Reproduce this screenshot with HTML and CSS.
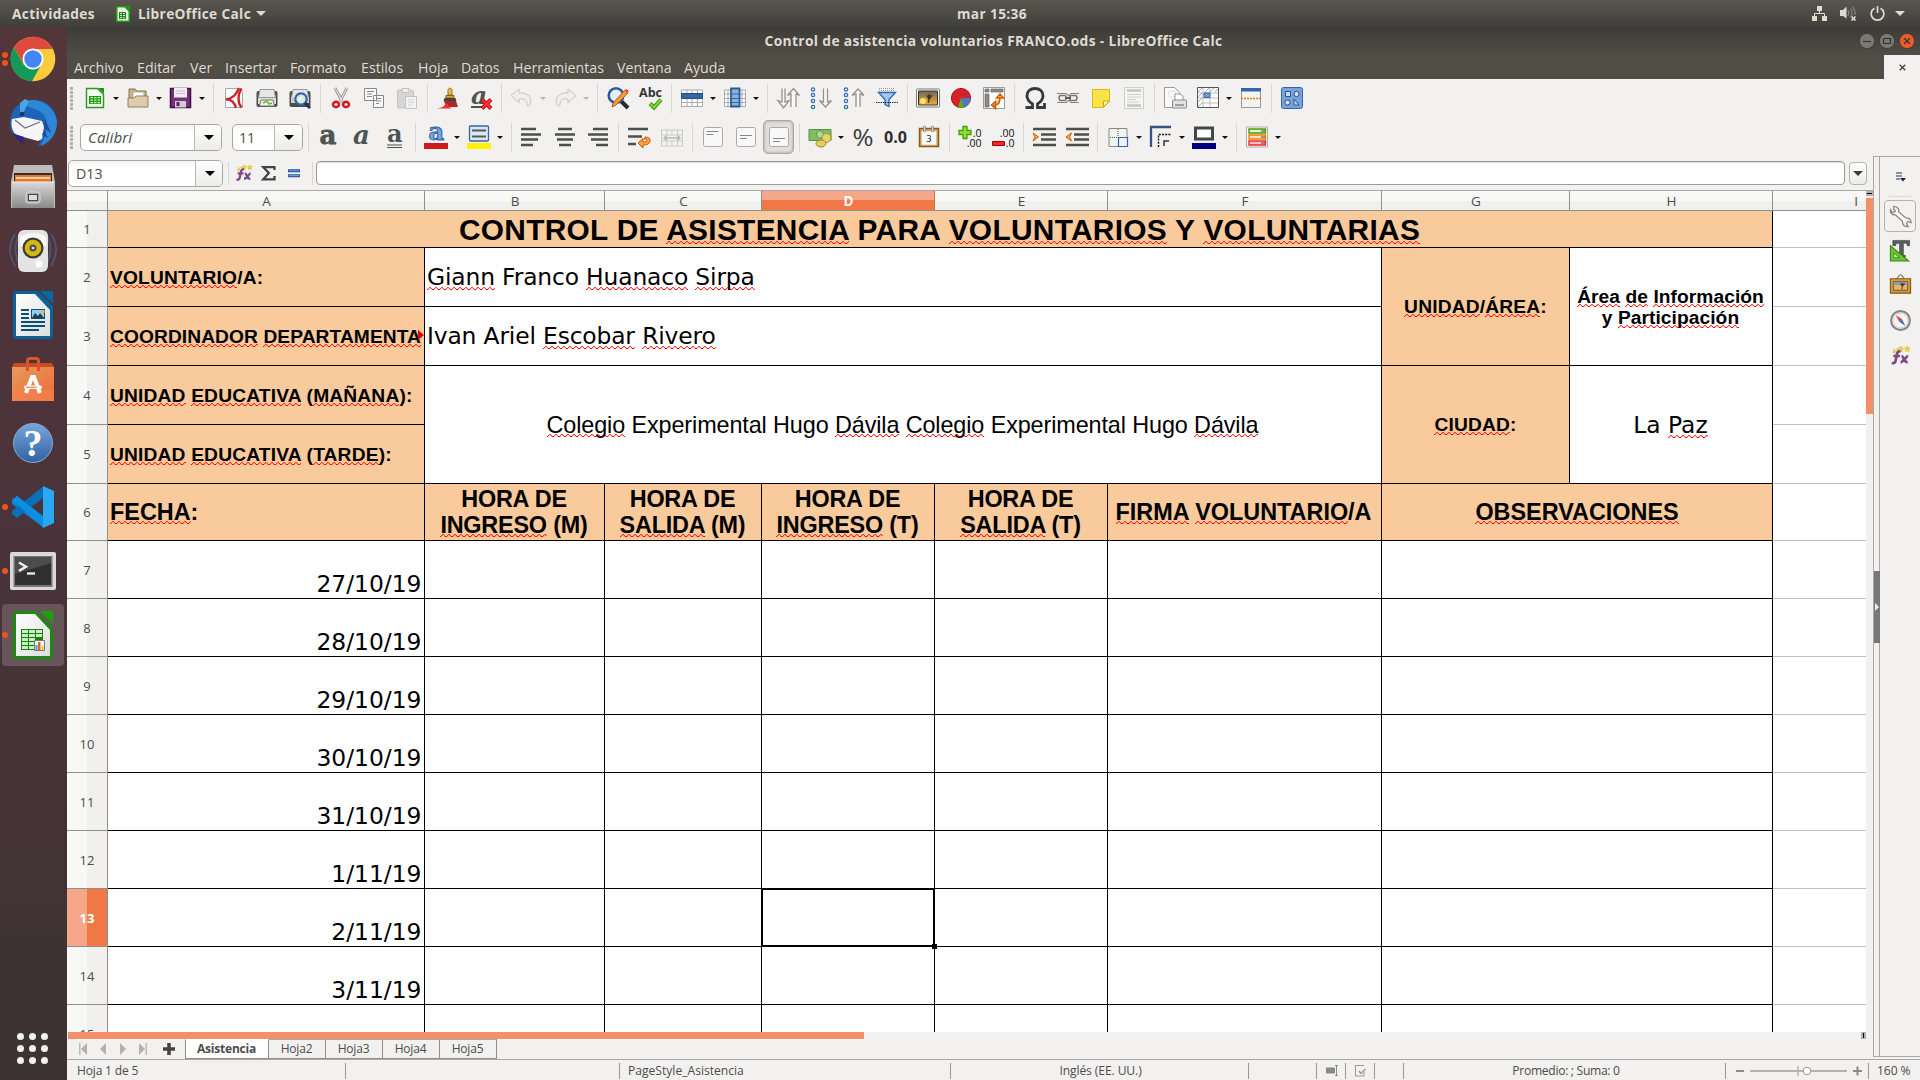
FILE: index.html
```html
<!DOCTYPE html>
<html lang="es">
<head>
<meta charset="utf-8">
<title>Control de asistencia voluntarios FRANCO.ods - LibreOffice Calc</title>
<link rel="stylesheet" href="styles.css">
</head>
<body>
<svg class="defs" width="0" height="0" aria-hidden="true">
  <defs>
    <linearGradient id="gBlue" x1="0" y1="0" x2="0" y2="1"><stop offset="0" stop-color="#7ba4dd"/><stop offset="1" stop-color="#2f639f"/></linearGradient>
    <linearGradient id="gGrey" x1="0" y1="0" x2="0" y2="1"><stop offset="0" stop-color="#d8d8d8"/><stop offset="1" stop-color="#8a8a8a"/></linearGradient>
    <linearGradient id="gPaper" x1="0" y1="0" x2="1" y2="1"><stop offset="0" stop-color="#fff"/><stop offset="1" stop-color="#dcdcdc"/></linearGradient>
    <linearGradient id="gBag" x1="0" y1="0" x2="1" y2="1"><stop offset="0" stop-color="#e69a5c"/><stop offset="1" stop-color="#ef6b35"/></linearGradient>
    <linearGradient id="gSky" x1="0" y1="0" x2="0" y2="1"><stop offset="0" stop-color="#6a6a60"/><stop offset="1" stop-color="#f7a831"/></linearGradient>
    <symbol id="fx" viewBox="0 0 24 24"><path d="M4 9l1-1M8 6l1-1" stroke="#f2cf27" stroke-width="2"/><path d="M12 2l1 2.200 2.200.3-1.700 1.500.4 2.200-1.900-1-2 1 .4-2.200-1.600-1.500 2.200-.3zM19 2l1 2 2.200.3-1.600 1.500.4 2.200-2-1-2 1 .4-2.200-1.600-1.500 2.200-.3zM5 5l.8 1.500 1.600.3-1.200 1.100.3 1.600L5 8.700z" fill="#f3d33a" stroke="#c9a51a" stroke-width=".4"/><g fill="none" stroke="#7b4a86" stroke-width="2.800"><path d="M12 8c-3-1-3.500 1-4 4l-1 5c-.5 3-2 3.500-4 2.500M4.500 12.500h7"/><path d="M13 12.500c2.500 0 2.500 7 6.500 6.500M20 12.500c-2 0-5 6.500-8 6.500"/></g></symbol>
    <symbol id="tree" viewBox="0 0 24 18"><path d="M12.500 16l1-5-2.500-4M13.500 11l3-4M13.500 9l-1-4" stroke="#33240f" stroke-width="1.600" fill="none"/><path d="M9 5l3 2 1-3 2 2 3-1-1 3-6 0z" fill="#4d3719"/></symbol>
  </defs>
</svg>

<header class="topbar">
  <div class="top-left"><span class="act">Actividades</span>
    <svg width="14" height="16" viewBox="0 0 14 16"><path d="M.8.8h8l4.400 4.400v10H.8z" fill="#f2f5ef" stroke="#1fa00e" stroke-width="1.500"/><path d="M9 0h5v5z" fill="#18a303"/><path d="M3 6h7v7H3z" fill="#15860a"/><path d="M4 7.500h2M7 7.500h2M4 9.500h2M7 9.500h2M4 11.700h2M7 11.700h2" stroke="#d8f5d3"/></svg>
    <span class="app">LibreOffice Calc</span><i class="tri light"></i></div>
  <div class="clock">mar 15:36</div>
  <div class="top-right">
    <svg width="15" height="15" viewBox="0 0 15 15"><path d="M5 0h5v5H5zM0 10h5v5H0zM10 10h5v5h-5z" fill="#dfdbd2"/><path d="M7.500 5v2.500M2.500 10V7.500h10V10" fill="none" stroke="#dfdbd2"/></svg>
    <svg width="17" height="15" viewBox="0 0 17 15"><path d="M0 4h3l3.500-3.500v12L3 10H0z" fill="#dfdbd2"/><path d="M8 4q1.500 3 0 6M10.500 2.500q3 4.500 0 9M12.500 1q3 3 2.500 8" fill="none" stroke="#85827b" stroke-width="1.300"/><path d="M11.500 10.500l4 4m0-4l-4 4" stroke="#dfdbd2" stroke-width="1.600"/></svg>
    <svg class="power" width="15" height="15" viewBox="0 0 15 15"><path d="M4.500 2.300a6.300 6.300 0 1 0 6 0M7.500 0v7" fill="none" stroke="#dfdbd2" stroke-width="1.700"/></svg>
    <i class="tri light"></i>
  </div>
</header>

<div class="desktop">
<nav class="dock">
  <div class="app-icon"><i class="run two"></i><svg width="46" height="46" viewBox="0 0 46 46"><circle cx="23" cy="23" r="22.300" fill="#fdcb3e"/><path d="M23 .7A22.300 22.300 0 0 0 4 11.500l9.500 16.500L23 13h20A22.300 22.300 0 0 0 23 .7z" fill="#dd4b3e"/><path d="M4 11.500A22.300 22.300 0 0 0 22 45.300L31 29l-9 4-8.500-4.500z" fill="#139a58"/><circle cx="23" cy="23" r="10.500" fill="#fff"/><circle cx="23" cy="23" r="8.700" fill="#4285f4"/></svg></div>
  <div class="app-icon"><svg width="48" height="48" viewBox="0 0 48 48"><path d="M20 2c14-4 26 6 28 20 0 12-7 22-19 25 3-4 3-7 2-9l-17-6L4 36C-2 24 2 8 12 5l2-3z" fill="#1b64b8"/><path d="M24 1c13 1 23 10 24 22 0 11-6 20-16 24 4-9 10-22 2-32C28 9 20 9 13 5c3-3 7-4 11-4z" fill="#2e86d6"/><path d="M11 4L16 0l4 2c-4 6-3 11-9 15z" fill="#4aa4e6"/><circle cx="13" cy="15" r="2.300" fill="#17355d"/><path d="M3 20l12-2 18 4 2 6-2 12-4 2-22-6C2 31 2 24 3 20z" fill="#f4f5f7"/><path d="M6 21l10 8 15-6" fill="none" stroke="#6f7478" stroke-width="1.200"/><path d="M3 34c4 6 8 9 13 11-2-3-2-4-1-7z" fill="#31257b"/><path d="M36 20l6 14-7-5zM35 31l4 8-6-3z" fill="#1b4d9c"/></svg></div>
  <div class="app-icon"><svg width="44" height="46" viewBox="0 0 44 46"><path d="M3 1h38l3 17v26H0V18z" fill="#bdbdbd"/><path d="M3 9h38v10H3z" fill="#3a2d24"/><path d="M4 11h36v7H4z" fill="#e8762c"/><path d="M5 14h34" stroke="#fff0c9" stroke-width="1.500"/><path d="M1 18h42v26H1z" fill="url(#gGrey)"/><path d="M1 18h42" stroke="#eee"/><rect x="15" y="28" width="14" height="11" rx="2.500" fill="#aaa" stroke="#ddd"/><rect x="17.500" y="30.500" width="9" height="6" fill="#ddd" stroke="#444"/></svg></div>
  <div class="app-icon"><svg width="50" height="46" viewBox="0 0 50 46"><path d="M7 6q-10 15 0 32M11 8q-7 12 0 28M43 6q10 15 0 32M39 8q7 12 0 28" fill="none" stroke="#4f5572" stroke-width="1.800"/><rect x="10" y="2" width="30" height="42" rx="6" fill="#e3e3e3"/><path d="M12 9q13-8 26 0v9H12z" fill="#f8f8f8"/><circle cx="25" cy="20" r="10.500" fill="#3b3b34"/><circle cx="25" cy="20" r="8.300" fill="#d6b814"/><circle cx="25" cy="20" r="3.600" fill="#555"/><circle cx="25" cy="20" r="1.300" fill="#ddd"/><circle cx="31" cy="36" r="3.500" fill="#fff"/></svg></div>
  <div class="app-icon"><svg width="40" height="48" viewBox="0 0 40 48"><path d="M3 0h22l15 15v30a3 3 0 0 1-3 3H3a3 3 0 0 1-3-3V3a3 3 0 0 1 3-3z" fill="#0b6198"/><path d="M27 0h13v13z" fill="#0369a3"/><path d="M3 3h19l15 16v26H3z" fill="url(#gPaper)"/><path d="M8 19h8M8 23h8M8 27h8M8 31h24M8 35h24M8 39h18" stroke="#0b5078" stroke-width="1.800"/><rect x="18.500" y="18.500" width="13" height="9" fill="#8fd0f4" stroke="#0b5078"/><path d="M19 27l3-5 3 3 2-3 4 5z" fill="#243b48"/><circle cx="30" cy="20.500" r="1.800" fill="#e8b64e"/></svg></div>
  <div class="app-icon"><svg width="42" height="44" viewBox="0 0 42 44"><path d="M2 6h38l2 4H0z" fill="#c94a20"/><path d="M0 10h42v34H0z" fill="url(#gBag)"/><path d="M0 33h42v11H0z" fill="#f4824d" opacity=".7"/><path d="M15.500 14V4q0-2.500 2.500-2.500h6q2.500 0 2.500 2.500v10" fill="none" stroke="#d9542a" stroke-width="3"/><path d="M14 36L20 20h2l6 16" fill="none" stroke="#fff" stroke-width="4"/><rect x="12" y="28.500" width="18" height="3.500" rx="1.700" fill="#fff"/><path d="M14 30.200h11" stroke="#ef6b35"/></svg></div>
  <div class="app-icon"><svg width="42" height="42" viewBox="0 0 42 42"><circle cx="21" cy="21" r="19.500" fill="url(#gBlue)" stroke="#84a9d8"/><text x="21" y="34" text-anchor="middle" font-family="Liberation Serif" font-size="38" font-weight="bold" fill="#fff">?</text></svg></div>
  <div class="app-icon"><i class="run"></i><svg width="42" height="42" viewBox="0 0 42 42"><path d="M0 14L5 10 32 31v11L0 18z" fill="#0a84d6"/><path d="M0 28L5 32 32 11V0L0 25z" fill="#0b70ba"/><path d="M0 14L5 10 32 31v11z" fill="#0d8ee0"/><path d="M31 0l11 5v32l-11 5z" fill="#2aa8f2"/></svg></div>
  <div class="app-icon"><i class="run"></i><svg width="46" height="38" viewBox="0 0 46 38"><rect width="46" height="38" rx="2" fill="#d9d9d9"/><rect x="3.500" y="4" width="39" height="31" fill="#777"/><rect x="5" y="5" width="36" height="28" fill="#303030"/><path d="M5 5h36v6L5 22z" fill="#4c4c4c"/><path d="M9 10.500l7 4.200-7 4.200" fill="none" stroke="#eee" stroke-width="2.400"/><path d="M17 21.500h8" stroke="#eee" stroke-width="2.300"/></svg></div>
  <div class="app-icon active"><i class="run"></i><svg width="40" height="48" viewBox="0 0 40 48"><path d="M3 0h20l17 17v28a3 3 0 0 1-3 3H3a3 3 0 0 1-3-3V3a3 3 0 0 1 3-3z" fill="#1a8a10"/><path d="M27 0h13v13z" fill="#18a303"/><path d="M3 3h19l15 16v26H3z" fill="url(#gPaper)"/><path d="M8 18h22v21H8z" fill="#1a7f10"/><path d="M9 20.500h6M16 20.500h6M23 20.500h6M9 24.500h6M16 24.500h6M23 24.500h6M9 28.500h6M16 28.500h6M9 32.500h6M16 32.500h6M9 36.500h6M16 36.500h6" stroke="#c9f0c2" stroke-width="3"/><path d="M21.500 29.500h10v10h-10z" fill="#fff" stroke="#777"/><path d="M22.500 34h2v5h-2z" fill="#29a3df"/><path d="M25 31h2.500v8H25z" fill="#e5641c"/><path d="M28.500 35h2v4h-2z" fill="#f1b51c"/></svg></div>
  <div class="launcher"><i></i><i></i><i></i><i></i><i></i><i></i><i></i><i></i><i></i></div>
</nav>

<main class="window">
  <div class="titlebar"><span class="title">Control de asistencia voluntarios FRANCO.ods - LibreOffice Calc</span>
    <div class="winbtns">
      <svg width="16" height="16" viewBox="0 0 16 16"><circle cx="8" cy="8" r="7.600" fill="#7b786f" stroke="#35342f" stroke-width=".7"/><path d="M4 8.500h8" stroke="#33322e" stroke-width="1.100"/></svg>
      <svg width="16" height="16" viewBox="0 0 16 16"><circle cx="8" cy="8" r="7.600" fill="#7b786f" stroke="#35342f" stroke-width=".7"/><path d="M4.500 5.500h7v5h-7z" fill="none" stroke="#33322e" stroke-width="1.200"/></svg>
      <svg width="16" height="16" viewBox="0 0 16 16"><circle cx="8" cy="8" r="7.600" fill="#ea5b2e" stroke="#35342f" stroke-width=".7"/><path d="M5.200 5.200l5.600 5.600m0-5.600l-5.600 5.600" stroke="#33322e" stroke-width="1.300"/></svg>
    </div>
  </div>
  <div class="menubar"><div class="menus"><span>Archivo</span><span>Editar</span><span>Ver</span><span>Insertar</span><span>Formato</span><span>Estilos</span><span>Hoja</span><span>Datos</span><span>Herramientas</span><span>Ventana</span><span>Ayuda</span></div>
    <div class="docclose"><svg width="7" height="7" viewBox="0 0 7 7"><path d="M.7.7l5.600 5.600m0-5.600L.7 6.300" stroke="#444" stroke-width="1.300"/></svg></div></div>

  <div class="toolbar std">
    <i class="handle"></i>
    <b class="tb"><svg viewBox="0 0 24 24"><path d="M3.500 2.500h11l6 6v13h-17z" fill="#f6faf5" stroke="#2a9a1c" stroke-width="1.400"/><path d="M15 2h6v6z" fill="#189b0d"/><path d="M6 10h12v8H6z" fill="#1c9a10"/><path d="M7.500 11.700h2.500M11 11.700h2.500M14.500 11.700H17M7.500 14.200h2.500M11 14.200h2.500M14.500 14.200H17M7.500 16.700h2.500M11 16.700h2.500M14.500 16.700H17" stroke="#c5f5bd" stroke-width="1.200"/></svg></b><i class="drop"></i>
    <b class="tb"><svg viewBox="0 0 24 24"><path d="M3 9V3h6l2 2h9v8H3z" fill="#c7b08c" stroke="#87714e"/><path d="M7 6h11v6H7z" fill="#fff" stroke="#b9a98c"/><path d="M2 21V12h6l2-2h12v11z" fill="#dfccae" stroke="#93805f"/></svg></b><i class="drop"></i>
    <b class="tb"><svg viewBox="0 0 24 24"><path d="M1.500 2.500h20v19h-20z" fill="#76307c" stroke="#3a1142" stroke-width="1.500"/><path d="M5 2h13v9.500H5z" fill="#f3eef5"/><path d="M7 5h9M7 7.500h9" stroke="#c9bed0"/><path d="M6 15h11v6.500H6z" fill="#cfcfcf"/><path d="M7.500 16h3v4h-3z" fill="#5a2261"/></svg></b><i class="drop"></i><i class="sep wide"></i>
    <b class="tb"><svg viewBox="0 0 24 24"><path d="M3.500 2.500h13l4 3v16h-17z" fill="#fafafa" stroke="#aaa"/><path d="M17 2c-3 7-5 9-13 12M4 13c5 0 9 4 10 9" fill="none" stroke="#cc2224" stroke-width="2.300"/><path d="M19.500 2.500c-4 6-4 14 0 19" fill="none" stroke="#cc2224" stroke-width="2.300"/></svg></b>
    <b class="tb"><svg viewBox="0 0 24 24"><rect x="1.500" y="5" width="21" height="16" rx="2" fill="#4a4d4a"/><path d="M5 3.500h14l1.500 8h-17z" fill="#e6e6e6" stroke="#999"/><path d="M3 12h18v6H3z" fill="#dcdcdc"/><path d="M6 14h12l1.500 6h-15z" fill="#eef8e6" stroke="#777"/><path d="M8 17l4-2 2 3 3-1" stroke="#63ba38" stroke-width="1.500" fill="none"/></svg></b>
    <b class="tb"><svg viewBox="0 0 24 24"><rect x="1.500" y="5" width="21" height="16" rx="2" fill="#4a4d4a"/><path d="M5 3.500h14l1.500 8h-17z" fill="#e6e6e6" stroke="#999"/><path d="M3 11h18v6H3z" fill="#ccc"/><circle cx="13" cy="13" r="5.700" fill="#d6ecd2" stroke="#3462af" stroke-width="2.200"/><path d="M11 14l3-3" stroke="#fff" stroke-width="2"/><path d="M17 17l5 5" stroke="#23334f" stroke-width="3"/></svg></b><i class="sep"></i>
    <b class="tb"><svg viewBox="0 0 24 24"><path d="M6 2l7.500 14M18 2l-7.500 14" stroke="#999" stroke-width="2.800"/><path d="M6 2l7.500 14M18 2l-7.500 14" stroke="#eee" stroke-width="1"/><ellipse cx="7" cy="18.500" rx="3" ry="2.600" fill="none" stroke="#cc1f26" stroke-width="2.600"/><ellipse cx="17" cy="18.500" rx="3" ry="2.600" fill="none" stroke="#cc1f26" stroke-width="2.600"/></svg></b>
    <b class="tb"><svg viewBox="0 0 24 24"><path d="M2.500 2.500h12v12h-12zM11.500 9.500h10v12h-10z" fill="#fafafa" stroke="#888"/><path d="M5 5.500h7M5 8h5M5 10.500h5M14 12.500h5M14 15h5M14 17.500h3" stroke="#888"/></svg></b>
    <b class="tb dim"><svg viewBox="0 0 24 24"><rect x="2.500" y="4" width="16" height="18" rx="1.500" fill="#d4d2cf" stroke="#bbb"/><path d="M7 2.500h7v4H7z" fill="#eee" stroke="#bbb"/><path d="M10.500 10.500h11v12h-11z" fill="#f4f4f4" stroke="#bbb"/><path d="M13 14h6M13 16.500h6M13 19h4" stroke="#ccc"/></svg></b><i class="sep"></i>
    <b class="tb"><svg viewBox="0 0 24 24"><path d="M12 9V4q2-4 4 0v5z" fill="#eeb95b" stroke="#a36b17"/><path d="M10 12V9.500h8V12z" fill="#e3a33e" stroke="#8f6020"/><path d="M8.500 12h11l1 3h-13z" fill="#444"/><path d="M8 15h12l2 6H10z" fill="#b1252b"/><path d="M1 22.500q8-1 9-6l5 6z" fill="#ef3333"/></svg></b>
    <b class="tb"><svg viewBox="0 0 24 24"><text x="2" y="18" font-family="DejaVu Serif" font-size="25" font-weight="bold" font-style="italic" fill="#4d5453">a</text><path d="M2 21h13" stroke="#4d5453" stroke-width="2"/><path d="M13 13.500l9 9m0-9l-9 9" stroke="#c01010" stroke-width="4"/><path d="M13.500 14l8 8m0-8l-8 8" stroke="#f34" stroke-width="1.800"/></svg></b><i class="sep"></i>
    <b class="tb dim"><svg viewBox="0 0 24 24"><path d="M1 9.500L9 3v4c9-1 14 5 11 12-1 1-3 1-3 0 0-5-3-7-8-6v4z" fill="#eee" stroke="#bfbfbd"/></svg></b><i class="drop off"></i>
    <b class="tb dim"><svg viewBox="0 0 24 24"><path d="M23 9.500L15 3v4C6 6 1 12 4 19c1 1 3 1 3 0 0-5 3-7 8-6v4z" fill="#eee" stroke="#bfbfbd"/></svg></b><i class="drop off"></i><i class="sep wide"></i>
    <b class="tb"><svg viewBox="0 0 24 24"><path d="M15 15l7 7" stroke="#232a36" stroke-width="4"/><circle cx="10" cy="9.500" r="7.300" fill="#e6edf7" stroke="#2f57a2" stroke-width="2.600"/><path d="M6 21l1-4L19 4l3 3L10 19z" fill="#f09b3b" stroke="#b35e13"/><path d="M18.500 4.500l2-1.500 2.500 2-2 2z" fill="#e34a4a"/></svg></b>
    <b class="tb"><svg viewBox="0 0 24 24"><text x="0" y="10.500" font-family="Open Sans" font-size="12.500" font-weight="700" fill="#333" textLength="23" lengthAdjust="spacingAndGlyphs">Abc</text><path d="M11 17.500l4 4 7-8" fill="none" stroke="#3a8f0c" stroke-width="4"/><path d="M11 17.500l4 4 7-8" fill="none" stroke="#7cdb35" stroke-width="2"/></svg></b><i class="sep"></i>
    <b class="tb"><svg viewBox="0 0 24 24"><path d="M1.500 4h21v16.500h-21z" fill="#fff" stroke="#aaa"/><path d="M2 7.500h20M2 12.500h20M2 16.500h20M7 4v17M12 4v17M17.500 4v17" stroke="#aaa"/><path d="M1.500 7.500h21v5h-21z" fill="#3465a4" stroke="#204a87"/></svg></b><i class="drop"></i>
    <b class="tb"><svg viewBox="0 0 24 24"><path d="M1.500 4h21v16.500h-21z" fill="#fff" stroke="#aaa"/><path d="M2 8h20M2 12.500h20M2 16.500h20M5 4v17M19 4v17" stroke="#aaa"/><path d="M8 2.500h8.500v18H8z" fill="#8eb2de" stroke="#2a5a99" stroke-width="1.800"/><path d="M8 8h8M8 12.500h8M8 16.500h8" stroke="#3465a4"/></svg></b><i class="drop"></i><i class="sep wide"></i>
    <b class="tb"><svg viewBox="0 0 24 24"><path d="M6 2.500V16l-4-1.500 5.500 7.500 5.500-7.500-4 1.500V2.500M15 21V8l-3.500 1.500L17.500 2.500 23.500 9.500 20 8v13" fill="#f8f8f8" stroke="#92928f" stroke-width="1.300"/></svg></b>
    <b class="tb"><svg viewBox="0 0 24 24"><g fill="#fff" stroke="#3a70b5" stroke-width="1.400"><circle cx="4" cy="3.500" r="1.600"/><circle cx="4" cy="9" r="1.600"/><circle cx="4" cy="15" r="1.600"/><circle cx="4" cy="21" r="1.600"/></g><path d="M14.500 2.500v13.500l-4-1.500 6 6.500 6-6.500-4 1.500V2.500" fill="#f8f8f8" stroke="#92928f" stroke-width="1.300"/></svg></b>
    <b class="tb"><svg viewBox="0 0 24 24"><g fill="#fff" stroke="#3a70b5" stroke-width="1.400"><circle cx="4" cy="3.500" r="1.600"/><circle cx="4" cy="9" r="1.600"/><circle cx="4" cy="15" r="1.600"/><circle cx="4" cy="21" r="1.600"/></g><path d="M14 21V8l-4 1.500L16 3l6 6.500L18 8v13" fill="#f8f8f8" stroke="#92928f" stroke-width="1.300"/></svg></b>
    <b class="tb"><svg viewBox="0 0 24 24"><path d="M4 2.500h16M4 4.500h16" stroke="#999" stroke-dasharray="1 1"/><path d="M3.500 6.500h17l-6.500 7v7l-4-2v-5z" fill="#a4c8f0" stroke="#2e66b0" stroke-width="1.300"/><path d="M1 16.500h22" stroke="#111" stroke-dasharray="1.300 1"/></svg></b><i class="sep"></i>
    <b class="tb"><svg viewBox="0 0 24 24"><rect x=".5" y="3" width="23" height="18" rx="1" fill="#fff" stroke="#777"/><path d="M2.500 5h19v14h-19z" fill="url(#gSky)" stroke="#333"/><circle cx="7" cy="15" r="3" fill="#ffe36b"/><use href="#tree" x="3" y="4" width="18" height="15"/></svg></b>
    <b class="tb"><svg viewBox="0 0 24 24"><circle cx="12" cy="12" r="9.600" fill="#d6202a" stroke="#a61118"/><path d="M12 12h9.600a9.600 9.600 0 0 1-7 9.200z" fill="#4a79bd"/><path d="M12 12l3 9.200q-3 1-6 0z" fill="#5cab27"/></svg></b>
    <b class="tb"><svg viewBox="0 0 24 24"><path d="M1.500 1.500h21v21h-21z" fill="#fff" stroke="#999"/><path d="M3 3h4v3H3zM9 3h12v3H9zM3 8h4v13H3z" fill="#8c8c8c" stroke="#555" stroke-width=".6"/><path d="M11 19.500c6 0 7-3 7-8M18 8l-3.500 4h7zM9.500 19l4-3.500v7z" fill="#f9b45a" stroke="#ce5c00" stroke-width="1.500"/></svg></b><i class="sep"></i>
    <b class="tb"><svg viewBox="0 0 24 24"><path d="M2.500 21.500h7v-3.500C5 15 4 12.500 4 10c0-5 3.500-7.500 8-7.500s8 2.500 8 7.500c0 2.500-1 5-5.500 8v3.500h7V17" fill="none" stroke="#34393c" stroke-width="2.800"/></svg></b>
    <b class="tb"><svg viewBox="0 0 24 24"><path d="M1 7.500h9l3 2.500 2-2.500h8M1 16.500h9l3-2.500 2 2.500h8" stroke="#888" fill="none" stroke-width="1.200"/><path d="M4 9.500q-2 2.500 0 5h5q3-2.500 0-5zM15 9.500q-3 2.500 0 5h5q2-2.500 0-5z" fill="none" stroke="#777" stroke-width="1.500"/><path d="M9 12h6" stroke="#555" stroke-width="1.800"/></svg></b>
    <b class="tb"><svg viewBox="0 0 24 24"><path d="M3.500 3.500h17v12l-6 6h-11z" fill="#f9e447" stroke="#dcb90d"/><path d="M14.500 21v-6h6z" fill="#fff9bd" stroke="#c8a50d"/></svg></b>
    <b class="tb dim"><svg viewBox="0 0 24 24"><path d="M2.500 1.500h19v21h-19z" fill="#f5f5f4" stroke="#c6c6c4"/><path d="M5 4.500h14M5 19.500h14" stroke="#bdbdbb" stroke-width="2.500"/><path d="M5 8.500h14M5 11h14M5 13.500h9M5 16h12" stroke="#ccc"/></svg></b><i class="sep"></i>
    <b class="tb"><svg viewBox="0 0 24 24"><path d="M1.500 1.500h10l5 5v15h-15z" fill="#fafafa" stroke="#999"/><path d="M6 5h6v6H6z" fill="none" stroke="#ddd"/><path d="M12 14V8h5l3 2v4" fill="#fff" stroke="#999"/><rect x="9.500" y="14" width="14" height="8" rx="1" fill="#e2e2e2" stroke="#888"/><path d="M12 19h9" stroke="#888" stroke-width="1.500"/></svg></b>
    <b class="tb"><svg viewBox="0 0 24 24"><path d="M1.500 1.500h21v20h-21z" fill="#fff"/><path d="M2 6l4-4M2 11l5-5M2 16l5-5M2 21l5-5M9 6l4-4M14 6l4-4M19 6l3-3" stroke="#8db3e2"/><path d="M7 1.500v20M14 2v20M1.500 7h21M1.500 12h21M7 17h15" stroke="#bbb"/><path d="M1.500 1.500h21v20h-21z" fill="none" stroke="#555"/><path d="M8 7h6v4.500H8z" fill="#729fcf" stroke="#3465a4"/></svg></b><i class="drop"></i>
    <b class="tb"><svg viewBox="0 0 24 24"><path d="M2.500 2.500h19v19h-19z" fill="#f3f3f2" stroke="#999"/><path d="M2 2h20v3.500H2z" fill="#3465a4"/><path d="M2 12.500h20" stroke="#f57900" stroke-width="1.300" stroke-dasharray="2 1"/></svg></b><i class="sep"></i>
    <b class="tb"><svg viewBox="0 0 24 24"><rect x="1.500" y="1.500" width="21" height="21" rx="2" fill="#78a3da" stroke="#3465a4"/><path d="M5.500 5.500h5v5h-5zM14 19h5l-5-6z" fill="#c9dcf3" stroke="#204a87" stroke-width=".9"/><circle cx="16.500" cy="8" r="2.600" fill="#d9e6f6" stroke="#204a87"/><circle cx="7.500" cy="16.500" r="2.600" fill="#d9e6f6" stroke="#204a87"/></svg></b>
  </div>

  <div class="toolbar fmt">
    <i class="handle"></i>
    <div class="combo font"><em>Calibri</em><span class="cbtn"><i></i></span></div>
    <div class="combo size"><span>11</span><span class="cbtn"><i></i></span></div>
    <i class="sep"></i>
    <b class="tb"><svg viewBox="0 0 24 24"><text x="2.500" y="18.500" font-family="DejaVu Serif" font-size="26" font-weight="bold" fill="#4d5453" stroke="#4d5453" stroke-width=".8">a</text></svg></b>
    <b class="tb"><svg viewBox="0 0 24 24"><text x="3" y="18.500" font-family="DejaVu Serif" font-size="26" font-weight="bold" font-style="italic" fill="#4d5453">a</text></svg></b>
    <b class="tb"><svg viewBox="0 0 24 24"><text x="4" y="17" font-family="DejaVu Serif" font-size="24" font-weight="bold" fill="#4d5453">a</text><path d="M4 20h15M4 22.500h15" stroke="#4d5453" stroke-width="1.200"/></svg></b><i class="sep"></i>
    <b class="tb"><svg viewBox="0 0 24 24"><text x="4.500" y="15" font-family="DejaVu Serif" font-size="24" font-weight="bold" fill="#7aa7e0" stroke="#2f62a8">a</text><path d="M0 18h24v6H0z" fill="#cc1c1c"/></svg></b><i class="drop"></i>
    <b class="tb"><svg viewBox="0 0 24 24"><rect x="2.500" y="1" width="19" height="15" rx="1" fill="#d9e7f7" stroke="#3465a4" stroke-width="1.300"/><path d="M5 5.500h14M5 11.500h14" stroke="#555b57" stroke-width="2.200"/><path d="M0 18h24v6H0z" fill="#fff200"/></svg></b><i class="drop"></i><i class="sep wide"></i>
    <b class="tb"><svg viewBox="0 0 24 24"><path d="M1 4h15M1 9.500h20M1 14.500h17M1 20h12" stroke="#4b504d" stroke-width="2.300"/></svg></b>
    <b class="tb"><svg viewBox="0 0 24 24"><path d="M5 4h14M2 9.500h20M4 14.500h16M6 20h12" stroke="#4b504d" stroke-width="2.300"/></svg></b>
    <b class="tb"><svg viewBox="0 0 24 24"><path d="M7 4h15M2 9.500h20M5 14.500h17M10 20h12" stroke="#4b504d" stroke-width="2.300"/></svg></b><i class="sep"></i>
    <b class="tb"><svg viewBox="0 0 24 24"><path d="M1 4h20M1 11.500h14M1 19h8" stroke="#4b504d" stroke-width="2.300"/><path d="M18 12q6 0 5 4.500Q22 20 16 20v3l-5-5 5-4.500V17q4 .500 4-1.500T17 14z" fill="#f8a24c" stroke="#ce5c00"/></svg></b>
    <b class="tb dim"><svg viewBox="0 0 24 24"><path d="M1.500 5h21v16h-21zM1.500 10h21M1.500 16h21M7 5v5M12 5v5M17.500 5v5M7 16v5M12 16v5M17.500 16v5" fill="#f3f3f2" stroke="#c3c3c1"/><path d="M4 13h16M7 10.500L4 13l3 2.500M17 10.500l3 2.500-3 2.500" stroke="#aaa" fill="none" stroke-width="1.500"/></svg></b><i class="sep"></i>
    <b class="tb"><svg viewBox="0 0 24 24"><rect x="2.500" y="2.500" width="19" height="19" rx="2" fill="#f8f8f8" stroke="#aaa"/><path d="M5.500 6.500h12M5.500 9.500h7" stroke="#888"/></svg></b>
    <b class="tb"><svg viewBox="0 0 24 24"><rect x="2.500" y="2.500" width="19" height="19" rx="2" fill="#f8f8f8" stroke="#aaa"/><path d="M6 10.500h12M6 13.500h7" stroke="#888"/></svg></b>
    <b class="tb on"><svg viewBox="0 0 24 24"><rect x="2.500" y="2.500" width="19" height="19" rx="2" fill="#f8f8f8" stroke="#aaa"/><path d="M6 13.500h12M6 16.500h7" stroke="#888"/></svg></b><i class="sep"></i>
    <b class="tb"><svg viewBox="0 0 24 24"><path d="M1 4.500h22v11H1z" fill="#80bd66" stroke="#54903f"/><ellipse cx="12" cy="9.500" rx="3.500" ry="3.800" fill="#a9d993" stroke="#5b9748"/><circle cx="18.500" cy="13" r="4.500" fill="#e7d46b" stroke="#ab9430"/><ellipse cx="13" cy="18.500" rx="5" ry="3.500" fill="#e2cd60" stroke="#a08a2b"/></svg></b><i class="drop"></i>
    <b class="tb"><svg viewBox="0 0 24 24"><text x="1.500" y="20.500" font-family="Open Sans" font-size="23" fill="#3c3c3c" textLength="21" lengthAdjust="spacingAndGlyphs">%</text></svg></b>
    <b class="tb"><svg viewBox="0 0 24 24"><text x="0" y="17.500" font-family="Open Sans" font-size="16" font-weight="700" fill="#2e2e2e" textLength="23" lengthAdjust="spacingAndGlyphs">0.0</text></svg></b>
    <b class="tb"><svg viewBox="0 0 24 24"><rect x="2.500" y="3.500" width="19" height="18" fill="#e0a84c" stroke="#8a5b13" stroke-width="1.500"/><path d="M4.500 6h15v14h-15z" fill="#fbfbfb" stroke="#bbb" stroke-width=".6"/><rect x="6.500" y="1" width="2" height="6" rx="1" fill="#ddd" stroke="#777" stroke-width=".7"/><rect x="14.500" y="1" width="2" height="6" rx="1" fill="#ddd" stroke="#777" stroke-width=".7"/><text x="12" y="16.500" text-anchor="middle" font-family="DejaVu Sans" font-size="8.500" fill="#222">3</text></svg></b><i class="sep"></i>
    <b class="tb"><svg viewBox="0 0 24 24"><path d="M5 1.500h4v4h4v4H9v4H5v-4H1v-4h4z" fill="#8ae234" stroke="#4e9a06" stroke-width="1.300"/><text x="23.500" y="12" text-anchor="end" font-family="Open Sans" font-size="10.500" fill="#111">.0</text><text x="23.500" y="22" text-anchor="end" font-family="Open Sans" font-size="10.500" fill="#111">.00</text></svg></b>
    <b class="tb"><svg viewBox="0 0 24 24"><path d="M1.500 16.500h12v4h-12z" fill="#ef2929" stroke="#a40000"/><text x="23.500" y="12" text-anchor="end" font-family="Open Sans" font-size="10.500" fill="#111">.00</text><text x="23.500" y="22" text-anchor="end" font-family="Open Sans" font-size="10.500" fill="#111">.0</text></svg></b><i class="sep"></i>
    <b class="tb"><svg viewBox="0 0 24 24"><path d="M1 4h23M9 9.500h15M9 14.500h15M1 20h23" stroke="#4b504d" stroke-width="2.300"/><path d="M1 8l5.500 4L1 16l2-4z" fill="#fcaf3e" stroke="#ce5c00"/></svg></b>
    <b class="tb"><svg viewBox="0 0 24 24"><path d="M1 4h23M9 9.500h15M9 14.500h15M1 20h23" stroke="#4b504d" stroke-width="2.300"/><path d="M6.500 8L1 12l5.500 4-2-4z" fill="#fcaf3e" stroke="#ce5c00"/></svg></b><i class="sep"></i>
    <b class="tb"><svg viewBox="0 0 24 24"><path d="M3 3.500h18v18H3z" fill="#f0f3ee" stroke="#888a85"/><path d="M12 4v8M4 12.500h8" stroke="#555" stroke-dasharray="1 1"/><path d="M12.500 12.500h9v9h-9z" fill="#eef3f9" stroke="#3465a4" stroke-width="1.200"/></svg></b><i class="drop"></i>
    <b class="tb"><svg viewBox="0 0 24 24"><path d="M2 22V2h20" fill="none" stroke="#36557e" stroke-width="2.300"/><path d="M9.500 22V9.500H22" fill="none" stroke="#111" stroke-width="1.400" stroke-dasharray="2 1.200"/><path d="M15 21v-5h5" fill="none" stroke="#333" stroke-width="1.500"/></svg></b><i class="drop"></i>
    <b class="tb"><svg viewBox="0 0 24 24"><path d="M3.500 3h17v11h-17z" fill="#fff" stroke="#444845" stroke-width="3"/><path d="M0 18h24v6H0z" fill="#000080"/></svg></b><i class="drop"></i><i class="sep wide"></i>
    <b class="tb"><svg viewBox="0 0 24 24"><path d="M1.500 2h21v20h-21z" fill="#fff" stroke="#aaa"/><path d="M4 4h16.500v4H4z" fill="#dff2cf" stroke="#4e9a06" stroke-width="1.400"/><path d="M4 10h16.500v4H4z" fill="#fde3c0" stroke="#f57900" stroke-width="1.400"/><path d="M4 16h16.500v4H4z" fill="#fac2c2" stroke="#ef2929" stroke-width="1.400"/><path d="M16 6h4M16 12h4M16 18h4" stroke="#444"/></svg></b><i class="drop"></i>
  </div>

  <div class="lower">
    <div class="work">
      <div class="formula">
        <div class="combo name"><span>D13</span><span class="cbtn"><i></i></span></div>
        <i class="sep"></i>
        <svg class="fi" viewBox="0 0 24 24"><use href="#fx"/></svg>
        <svg class="fi sum" viewBox="0 0 24 24"><path d="M20 8V4H5l7.500 8L5 20.500h15V16" fill="none" stroke="#3e4344" stroke-width="3"/></svg>
        <svg class="fi eq" viewBox="0 0 24 24"><path d="M4 9h16M4 15.500h16" stroke="#1f4f90" stroke-width="4"/><path d="M5 9h14M5 15.500h14" stroke="#6ba0dc" stroke-width="1.500"/></svg>
        <i class="sep"></i>
        <div class="input"></div>
        <div class="expand"><i></i></div>
      </div>

      <div class="gridwrap">
      <div class="sheet">
        <div class="ch corner"></div><div class="ch">A</div><div class="ch">B</div><div class="ch">C</div><div class="ch sel">D</div><div class="ch">E</div><div class="ch">F</div><div class="ch">G</div><div class="ch">H</div><div class="ch last">I</div>

        <div class="rh">1</div><div class="c o mid title1 s8"><p>CONTROL DE <u>ASISTENCIA</u> PARA <u>VOLUNTARIOS</u> Y <u>VOLUNTARIAS</u></p></div><div class="g"></div>

        <div class="rh">2</div><div class="c o b9"><p><u>VOLUNTARIO</u>/A:</p></div><div class="c dv name-cell s5"><p><u>Giann</u> Franco <u>Huanaco</u> <u>Sirpa</u></p></div><div class="c o mid b9 r2"><p><u>UNIDAD</u>/<u>ÁREA</u>:</p></div><div class="c mid b9 area r2"><p><u>Área</u> <u>de</u> <u>Información</u><br>y <u>Participación</u></p></div><div class="g"></div>
        <div class="rh">3</div><div class="c o b9 more"><p><u>COORDINADOR</u> <u>DEPARTAMENTA</u></p></div><div class="c dv name-cell s5"><p>Ivan Ariel <u>Escobar</u> <u>Rivero</u></p></div><div class="g"></div>
        <div class="rh">4</div><div class="c o b9"><p><u>UNIDAD</u> <u>EDUCATIVA</u> (<u>MAÑANA</u>):</p></div><div class="c mid n11 s5 r2"><p><u>Colegio</u> Experimental Hugo <u>Dávila</u> <u>Colegio</u> Experimental Hugo <u>Dávila</u></p></div><div class="c o mid b9 r2"><p><u>CIUDAD</u>:</p></div><div class="c mid dv city r2"><p>La <u>Paz</u></p></div><div class="g"></div>
        <div class="rh">5</div><div class="c o b9"><p><u>UNIDAD</u> <u>EDUCATIVA</u> (<u>TARDE</u>):</p></div><div class="g"></div>

        <div class="rh">6</div><div class="c o b11"><p><u>FECHA</u>:</p></div><div class="c o mid b11 hr"><p>HORA DE<br><u>INGRESO</u> (M)</p></div><div class="c o mid b11 hr"><p>HORA DE<br><u>SALIDA</u> (M)</p></div><div class="c o mid b11 hr"><p>HORA DE<br><u>INGRESO</u> (T)</p></div><div class="c o mid b11 hr"><p>HORA DE<br><u>SALIDA</u> (T)</p></div><div class="c o mid b11 sign"><p><u>FIRMA</u> <u>VOLUNTARIO</u>/A</p></div><div class="c o mid b11 s2"><p><u>OBSERVACIONES</u></p></div><div class="g"></div>

        <div class="rh">7</div><div class="c date">27/10/19</div><div class="c"></div><div class="c"></div><div class="c"></div><div class="c"></div><div class="c"></div><div class="c s2"></div><div class="g"></div>
        <div class="rh">8</div><div class="c date">28/10/19</div><div class="c"></div><div class="c"></div><div class="c"></div><div class="c"></div><div class="c"></div><div class="c s2"></div><div class="g"></div>
        <div class="rh">9</div><div class="c date">29/10/19</div><div class="c"></div><div class="c"></div><div class="c"></div><div class="c"></div><div class="c"></div><div class="c s2"></div><div class="g"></div>
        <div class="rh">10</div><div class="c date">30/10/19</div><div class="c"></div><div class="c"></div><div class="c"></div><div class="c"></div><div class="c"></div><div class="c s2"></div><div class="g"></div>
        <div class="rh">11</div><div class="c date">31/10/19</div><div class="c"></div><div class="c"></div><div class="c"></div><div class="c"></div><div class="c"></div><div class="c s2"></div><div class="g"></div>
        <div class="rh">12</div><div class="c date">1/11/19</div><div class="c"></div><div class="c"></div><div class="c"></div><div class="c"></div><div class="c"></div><div class="c s2"></div><div class="g"></div>
        <div class="rh sel">13</div><div class="c date">2/11/19</div><div class="c"></div><div class="c"></div><div class="c cursor"></div><div class="c"></div><div class="c"></div><div class="c s2"></div><div class="g"></div>
        <div class="rh">14</div><div class="c date">3/11/19</div><div class="c"></div><div class="c"></div><div class="c"></div><div class="c"></div><div class="c"></div><div class="c s2"></div><div class="g"></div>
        <div class="rh">15</div><div class="c"></div><div class="c"></div><div class="c"></div><div class="c"></div><div class="c"></div><div class="c"></div><div class="c s2"></div><div class="g"></div>
      </div>
      <div class="vscroll"><i class="split"></i><i class="thumb"></i></div>
      </div>
      <div class="hscroll"><i class="thumb"></i><i class="split"></i></div>
      <div class="tabs">
        <div class="nav">
          <svg width="8" height="12" viewBox="0 0 8 12"><path d="M8 0v12L2 6z" fill="#b4b2ae"/><path d="M.8 0v12" stroke="#b4b2ae" stroke-width="1.300"/></svg>
          <svg width="8" height="12" viewBox="0 0 8 12"><path d="M7 0v12L1 6z" fill="#b4b2ae"/></svg>
          <svg width="8" height="12" viewBox="0 0 8 12"><path d="M1 0v12l6-6z" fill="#b4b2ae"/></svg>
          <svg width="8" height="12" viewBox="0 0 8 12"><path d="M0 0v12l6-6z" fill="#b4b2ae"/><path d="M7.200 0v12" stroke="#b4b2ae" stroke-width="1.300"/></svg>
        </div>
        <svg class="add" width="12" height="12" viewBox="0 0 12 12"><path d="M6 0v12M0 6h12" stroke="#444" stroke-width="3.600"/></svg>
        <div class="tab cur">Asistencia</div><div class="tab">Hoja2</div><div class="tab">Hoja3</div><div class="tab">Hoja4</div><div class="tab">Hoja5</div>
      </div>
    </div>
    <aside class="side">
      <svg class="menuicon" width="10" height="10" viewBox="0 0 10 10"><path d="M0 1h6M0 4h6M0 7h4" stroke="#2b3350" stroke-width="1.200"/><path d="M4 6h6L7 9.500z" fill="#1b2440"/></svg>
      <hr>
      <div class="sb box"><svg viewBox="0 0 24 24"><path d="M5 1.500q-1 2 1 4t-3 2Q1.500 6 1.500 4q-1 6 5.500 6.500L14 17q0 6 6 5.500l-2-3 2-2.500 3 1.500q0-5-5.500-5L10 7q1-4.500-5-5.500z" fill="#f7f7f6" stroke="#868683" stroke-width="1.300"/></svg></div>
      <div class="sb"><svg viewBox="0 0 24 24"><path d="M4 1.500h17.500V7H19l-.5-2.500H15V17h2v2H9v-2h2V4.500H7.500L7 7H4z" fill="#56605f" stroke="#353b3a" stroke-width=".6"/><path d="M1.500 7v16h19z" fill="#6cc235" stroke="#3f8a12" stroke-width="1.200"/><path d="M5 14.500v5h6z" fill="#d5f2c0" stroke="#3f8a12"/></svg></div>
      <div class="sb gal"><svg viewBox="0 0 24 24"><path d="M8 5l3-4h2l3 4" fill="none" stroke="#777" stroke-width="1.200"/><path d="M1.500 5h21v15h-21z" fill="#d99b3a" stroke="#8a570c" stroke-width="1.200"/><path d="M4.500 8h15v9h-15z" fill="#e9b362" stroke="#5d574c"/><path d="M5 8.500h14v3H5z" fill="#7c9cc0"/><use href="#tree" x="6" y="6" width="14" height="12"/></svg></div>
      <div class="sb comp"><svg viewBox="0 0 24 24"><circle cx="12" cy="12" r="9.800" fill="#f5f5f5" stroke="#858585" stroke-width="2.200"/><circle cx="12" cy="12" r="7.800" fill="none" stroke="#ccc"/><path d="M7 6.500l6.500 4-2.500 3z" fill="#e3383c"/><path d="M17 17.500l-6-4 2.500-3z" fill="#3f6fb0"/></svg></div>
      <div class="sb fxs"><svg viewBox="0 0 24 24"><use href="#fx"/></svg></div>
      <div class="grip"></div>
    </aside>
  </div>

  <footer class="status">
    <div class="st a">Hoja 1 de 5</div><div class="st b"></div><div class="st c1">PageStyle_Asistencia</div><div class="st d">Inglés (EE. UU.)</div><div class="st e"></div>
    <div class="st f"><svg width="12" height="11" viewBox="0 0 12 11"><path d="M0 2.500h9v6H0z" fill="#888a85"/><path d="M9 .5h3M9 10.500h3M10.500.5v10" stroke="#888a85"/></svg></div>
    <div class="st f"><svg width="12" height="12" viewBox="0 0 12 12"><path d="M9 7v4H.5V.5H9" fill="none" stroke="#999"/><path d="M4 6l2 2.500L10.500 4" fill="none" stroke="#999" stroke-width="1.500"/></svg></div>
    <div class="st f"></div>
    <div class="st h">Promedio: ; Suma: 0</div>
    <div class="st z"><svg width="128" height="12" viewBox="0 0 128 12"><path d="M0 6h8M117 6h9M121.500 1.500v9" stroke="#8b8b87" stroke-width="2"/><path d="M14 6h97" stroke="#b5b3af" stroke-width="2"/><path d="M62 1v10" stroke="#b5b3af" stroke-width="1.500"/><circle cx="71" cy="6" r="3.800" fill="#fff" stroke="#999"/></svg></div>
    <div class="st p">160 %</div>
  </footer>
</main>
</div>
</body>
</html>
```
FILE: styles.css
```css
* { box-sizing: border-box; }
body { margin: 0; width: 1920px; height: 1080px; overflow: hidden; font-family: "Open Sans", "Noto Sans", sans-serif; font-size: 14.2px; color: #4c4c4c; background: #f2f1ef; }
.defs { position: absolute; }
svg { display: block; flex: none; }
p { margin: 0; }

.topbar { height: 27px; display: grid; grid-template-columns: 1fr auto 1fr; align-items: center; background: linear-gradient(#59564e, #403f3a); color: #dfdbd2; font-weight: 700; font-size: 13.7px; line-height: 20px; letter-spacing: .35px; padding: 0 15px 0 12px; }
.top-left { display: flex; align-items: center; }
.act { width: 104px; }
.app { margin: 0 5px 0 8px; white-space: nowrap; }
.clock { white-space: nowrap; padding-left: 67px; }
.top-right { display: flex; justify-content: flex-end; align-items: center; gap: 13px; }
.power { margin-right: -3px; }
.tri { border: 5px solid transparent; border-top-color: #dfdbd2; border-bottom: 0; }

.desktop { display: flex; height: 1053px; }
.dock { width: 67px; background: linear-gradient(#533639, #4a333a 45%, #3c3234); display: flex; flex-direction: column; }
.app-icon { height: 64px; display: flex; align-items: center; justify-content: center; position: relative; flex: none; padding-right: 1px; }
.app-icon.active::before { content: ""; position: absolute; inset: 1px 3px 1px 2px; background: #68555b; border-radius: 4px; }
.app-icon svg { position: relative; }
.run { position: absolute; left: 2px; top: 29px; width: 6px; height: 6px; border-radius: 50%; background: #e95420; z-index: 1; }
.run.two { top: 25px; box-shadow: 0 8px #e95420; }
.launcher { margin: auto 0 16px 17px; display: grid; grid-template-columns: repeat(3, 7px); gap: 5px; }
.launcher i { width: 7px; height: 7px; border-radius: 50%; background: #f3f1f1; }

.window { width: 1853px; display: flex; flex-direction: column; }
.titlebar { height: 28px; background: linear-gradient(#3c3b37, #504d45); color: #dfdbd2; font-weight: 700; font-size: 13.8px; letter-spacing: .35px; display: flex; align-items: center; justify-content: center; position: relative; padding-bottom: 1px; }
.winbtns { position: absolute; right: 5px; top: 6px; display: flex; gap: 4px; }
.menubar { height: 24px; background: #504d45; color: #dfdbd2; display: flex; justify-content: space-between; }
.menus { display: grid; grid-template-columns: 63px 53px 35px 65px 71px 57px 43px 52px 104px 67px 50px; padding-left: 7px; line-height: 25px; }
.docclose { width: 36px; background: #f2f1f0; display: grid; place-items: center; }

.toolbar { display: flex; align-items: center; height: 39px; }
.toolbar.std { padding-bottom: 1px; }
.toolbar.fmt { height: 38px; }
.handle { width: 3px; height: 23px; margin: 0 5px 0 3px; background: repeating-linear-gradient(#b3b1ad 0 3px, transparent 3px 4px); }
.fmt .handle { margin-right: 7px; }
.tb { width: 33px; height: 34px; display: grid; place-items: center; flex: none; font-weight: 400; }
.tb svg { width: 24px; height: 24px; overflow: visible; }
.tb.dim { opacity: .85; }
.tb.on { position: relative; }
.tb.on::before { content: ""; position: absolute; inset: 0 1px; border: 1px solid #aaa8a4; border-radius: 5px; background: #e0dfdd; box-shadow: inset 0 0 3px #999; }
.tb.on svg { position: relative; }
.drop { width: 10px; flex: none; display: grid; place-items: center; }
.drop::before { content: ""; border: 3px solid transparent; border-top-color: #111; border-bottom: 0; }
.drop.off::before { border-top-color: #b5b3b0; }
.sep { width: 8px; height: 29px; flex: none; background: linear-gradient(#d9d7d4, #d9d7d4) 4px 0 / 1px 100% no-repeat; }
.sep.wide { width: 10px; background-position-x: 6px; }
.combo { height: 27px; border: 1px solid #a9a6a1; border-radius: 5px; background: linear-gradient(#f4f4f3, #fff 30%); display: flex; align-items: stretch; overflow: hidden; line-height: 25px; flex: none; }
.combo > :first-child { flex: 1; padding-left: 7px; }
.cbtn { width: 28px; border-left: 1px solid #bbb8b3; background: linear-gradient(#fdfdfd, #ececea); display: grid; place-items: center; }
.cbtn i, .expand i { border: 5px solid transparent; border-top-color: #000; border-bottom: 0; }
.combo.font { width: 142px; margin-right: 10px; font-size: 15px; letter-spacing: .15px; }
.font .cbtn { width: 27px; padding-left: 1px; }
.combo.size { width: 71px; margin-right: 1px; }
.combo.size > :first-child { padding-left: 6px; }
.combo.name { width: 155px; margin: 0 1px 0 1px; }
.name .cbtn { width: 27px; padding-left: 1px; }

.lower { display: flex; height: 903px; }
.work { width: 1806px; display: flex; flex-direction: column; }
.formula { height: 34px; display: flex; align-items: center; }
.fi { width: 20px; height: 20px; margin: 0 3px 0 2px; }
.fi.sum { width: 19px; margin: 0 3px 0 2px; height: 18px; }
.fi.eq { width: 18px; height: 18px; margin: 0 5px 0 4px; }
.formula .sep { height: 23px; }
.input { flex: 1; height: 24px; border: 1px solid #9c9a96; border-radius: 4px; background: #fff; box-shadow: inset 0 1px 1px #ddd; }
.expand { width: 18px; height: 23px; margin: 0 6px 0 4px; border: 1px solid #b5b3af; border-radius: 4px; background: linear-gradient(#fff, #ececea); display: grid; place-items: center; }
.expand i { border-top-color: #3c3c3c; }

.gridwrap { display: flex; height: 842px; border-top: 1px solid #a9a8a4; flex: none; }
.sheet { width: 1799px; height: 841px; overflow: hidden; background: #fff; color: #000; display: grid;
  grid-template-columns: 41px 317px 180px 157px 173px 173px 274px 188px 203px 93px;
  grid-template-rows: 20px 37px repeat(4, 59px) 57px repeat(8, 58px) 58px; }
.ch { background: linear-gradient(#f8f8f7 10px, #f1f0ee 10px); border-right: 1px solid #8f8f8b; border-bottom: 1px solid #8f8f8b; color: #4c4c4c; text-align: center; line-height: 20px; height: 20px; font-size: 13.5px; padding-left: 1px; }
.ch.sel { background: linear-gradient(#f5a78a 9px, #f07746 9px); color: #fff; font-weight: 700; border-right-color: #d96e45; }
.ch.last { border-right: 0; text-align: right; padding-right: 8px; }
.rh { background: linear-gradient(90deg, #f8f8f7 20px, #f1f0ee 20px); border-right: 1px solid #8f8f8b; border-bottom: 1px solid #8f8f8b; color: #4c4c4c; font-size: 13px; display: grid; place-items: center; grid-column: 1; }
.rh.sel { background: linear-gradient(90deg, #f5a78a 20px, #f07746 20px); color: #fff; font-weight: 700; }
.c { border-right: 1px solid #000; border-bottom: 1px solid #000; display: flex; align-items: center; padding-left: 2px; white-space: nowrap; min-width: 0; position: relative; }
.g { border-bottom: 1px solid #c0c0c0; grid-column: 10; }
.o { background: #f8ca9c; }
.mid { justify-content: center; text-align: center; padding-left: 0; }
.s2 { grid-column: span 2; }
.s5 { grid-column: span 5; }
.s8 { grid-column: span 8; }
.r2 { grid-row: span 2; }
.b9 { font: bold 19.2px/21px "Liberation Sans", sans-serif; letter-spacing: .17px; }
.b11 { font: bold 23.4px/26px "Liberation Sans", sans-serif; }
.b11.hr { letter-spacing: -.2px; padding-right: 1px; }
.b11.sign { padding-right: 2px; }
.n11 { font: 23.4px/26px "Liberation Sans", sans-serif; letter-spacing: -.11px; padding-right: 1px; }
.title1 { font: bold 29.87px/34px "Liberation Sans", sans-serif; letter-spacing: .3px; padding: 1px 1px 0 0; }
.dv { font: 23.4px/27px "DejaVu Sans", sans-serif; }
.name-cell { letter-spacing: -.16px; }
.area { padding-right: 1px; letter-spacing: .06px; }
.city { padding: 2px 1px 0 0; }
.date { font: 23.4px/27px "DejaVu Sans", sans-serif; justify-content: flex-end; align-items: flex-end; padding-right: 2.5px; }
u { text-decoration: none; background: url("data:image/svg+xml,%3Csvg xmlns='http://www.w3.org/2000/svg' width='6' height='3'%3E%3Cpath d='M0 2.500L1 2.500 2.500.5 3.500.5 5 2.500 6 2.500' fill='none' stroke='red'/%3E%3C/svg%3E") 0 100% repeat-x; }
.b11 u, .n11 u, .dv u { background-position-y: calc(100% - 1px); }
.title1 u { background-position-y: calc(100% - 2px); }
.more { letter-spacing: .08px; }
.more p { width: 314px; overflow: hidden; }
.more::after { content: ""; position: absolute; right: 0; top: 23px; border: 5px solid transparent; border-left: 6px solid #e00000; border-right: 0; }
.cursor::before { content: ""; position: absolute; inset: -1px -1px -1px -1px; border: 2px solid #000; }
.cursor::after { content: ""; position: absolute; right: -3px; bottom: -3px; width: 5px; height: 5px; background: #000; }

.vscroll { width: 7px; display: flex; flex-direction: column; }
.vscroll .split { height: 5px; background: linear-gradient(#000, #000) 1px 2px / 5px 1px no-repeat #b3b1ad; margin-bottom: 2px; }
.vscroll .thumb { height: 216px; background: #f39069; }
.hscroll { height: 7px; display: flex; justify-content: space-between; padding: 0 7px 0 1px; flex: none; }
.hscroll .thumb { width: 796px; background: #f39069; }
.hscroll .split { width: 5px; background: linear-gradient(#000, #000) 2px 1px / 1px 5px no-repeat #b3b1ad; }
.tabs { height: 20px; display: flex; align-items: flex-start; font-size: 12px; line-height: 18px; }
.nav { display: flex; gap: 12px; padding: 4px 0 0 12px; width: 96px; }
.add { margin: 4px 10px 0 0; }
.tab { height: 20px; width: 57px; border: 1px solid #8f8f8b; border-top-color: #aaa; border-left: 0; text-align: center; letter-spacing: -.2px; padding-right: 1px; }
.tab.cur { width: 84px; background: #fff; font-weight: 700; border-left: 1px solid #8f8f8b; border-top-color: #fff; }

.side { width: 47px; height: 901px; border: 1px solid #a9a8a4; border-right: 0; position: relative; display: flex; flex-direction: column; align-items: center; padding-left: 6px; background: linear-gradient(#a9a8a4, #a9a8a4) 5px 0 / 1px 100% no-repeat; }
.menuicon { margin: 15px 0 0 2px; }
.side hr { width: 22px; height: 1px; border: 0; background: #dcdad7; margin: 14px 0 3px; }
.sb { width: 32px; height: 35px; display: grid; place-items: center; flex: none; }
.sb svg { width: 23px; height: 23px; }
.sb.box { border: 1px solid #b5b3af; border-radius: 4px; height: 32px; margin-bottom: 1px; }
.grip { position: absolute; left: 0; top: 414px; width: 6px; height: 72px; background: #77767a; display: grid; place-items: center; }
.grip::before { content: ""; border: 4px solid transparent; border-left: 4px solid #eee; border-right: 0; }

.status { flex: 1; border-top: 1px solid #a9a8a4; display: flex; align-items: center; font-size: 12.1px; padding-top: 1px; letter-spacing: -.1px; }
.st { height: 16px; line-height: 16px; border-right: 1px solid #999894; display: flex; align-items: center; flex: none; }
.st.a { width: 279px; padding-left: 10px; letter-spacing: -.2px; }
.st.b { width: 274px; }
.st.c1 { width: 331px; padding-left: 8px; letter-spacing: 0; }
.st.d { width: 298px; justify-content: center; padding-left: 2px; }
.st.e { width: 68px; }
.st.f { width: 29px; justify-content: center; padding-left: 1px; }
.st.h { width: 322px; justify-content: center; padding-left: 3px; letter-spacing: -.3px; }
.st.z { width: 143px; padding-left: 10px; }
.st.p { border: 0; padding-left: 8px; }
```
